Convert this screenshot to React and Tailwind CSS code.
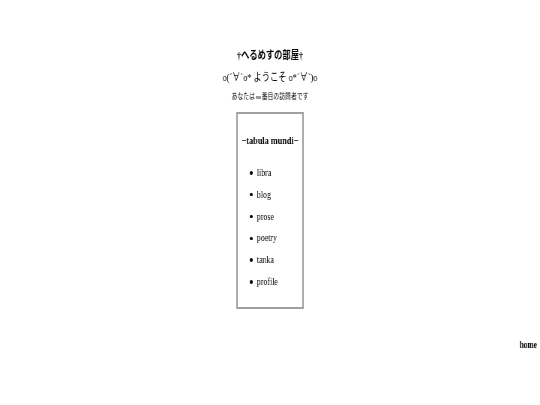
import React from 'react';

const links = ['libra', 'blog', 'prose', 'poetry', 'tanka', 'profile'];

function App() {
  return (
    <div className="w-[540px] h-[405px] overflow-hidden bg-white">
      {/* page is drawn at 720 wide and squeezed horizontally */}
      <div
        className="w-[720px] h-[405px] origin-top-left scale-x-75 will-change-transform text-black"
        style={{ fontFamily: '"Liberation Serif", "Noto Sans CJK JP", serif' }}
      >
        <div className="pt-[44px] text-center">
          <h1 className="text-[11px] leading-[22px] font-bold">†へるめすの部屋†</h1>
          <p className="text-[11px] leading-[22px]">o(´∀`o* ようこそ o*´∀`)o</p>
          <p className="text-[7.8px] leading-[18px] flex items-center justify-center">
            あなたは
            <span className="inline-block w-[7px] h-[3px] bg-[#999] mx-[1px]" />
            番目の訪問者です
          </p>
        </div>

        <div className="mt-[6px] mx-auto w-[90px] h-[197px] border-2 border-[#a0a0a0] pt-[16px]">
          <h2 className="text-center text-[11px] leading-[20px] font-bold">−tabula mundi−</h2>
          <ul className="mt-[12px] pl-[16px]">
            {links.map((l) => (
              <li key={l} className="flex items-center h-[21.8px] text-[10.5px]">
                <span className="w-[3.5px] h-[3.5px] rounded-full bg-black mr-[6px]" />
                <a href="#" className="text-black">{l}</a>
              </li>
            ))}
          </ul>
        </div>

        <div className="mt-[22px] pr-[4px] text-right">
          <a href="#" className="text-[10px] leading-[16px] font-bold text-black">home</a>
        </div>
      </div>
    </div>
  );
}

export default App;
